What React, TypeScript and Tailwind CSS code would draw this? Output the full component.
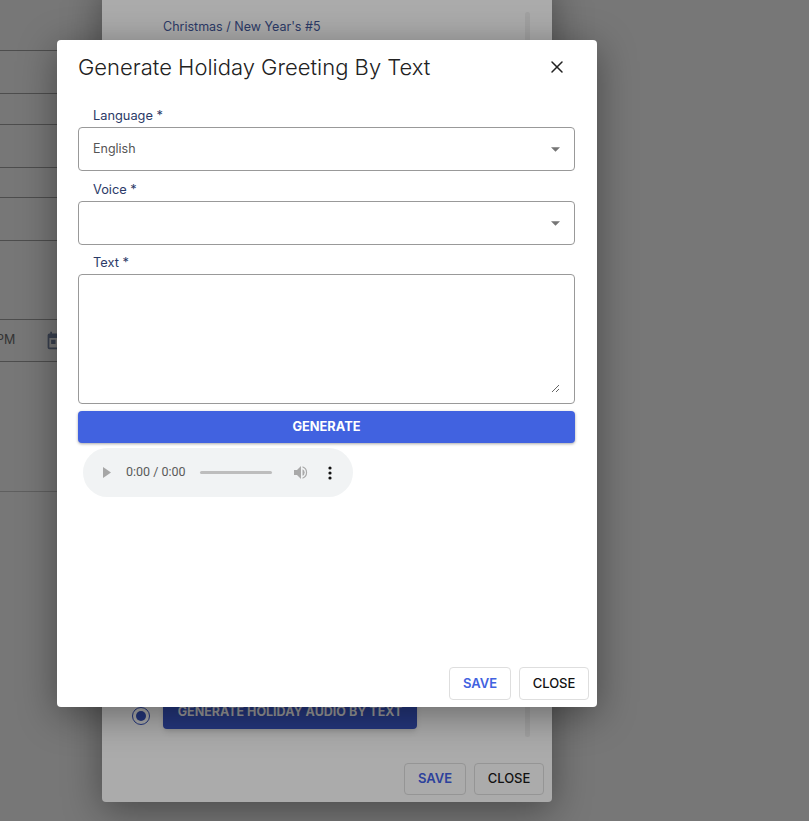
import React from 'react';
import { X } from 'lucide-react';

const labelClass = 'block pl-[15px] pt-[1px] text-[12.8px] leading-[16px] text-[#2b3a67]';

const SelectField = ({ label, value }: { label: string; value?: string }) => (
  <div>
    <label className={labelClass}>{label} *</label>
    <div className="mt-[3px] flex h-[44px] items-center justify-between rounded border border-[#999999] bg-white pl-[14px] pr-[14px]">
      <span className="text-[12.5px] text-[#555555]">{value}</span>
      <svg width="9" height="5" viewBox="0 0 10 5" className="fill-[#757575]">
        <path d="M0 0h10L5 5z" />
      </svg>
    </div>
  </div>
);

const BackgroundForm = () => (
  <div className="w-[102px]">
    <div className="h-[51px] border-b border-[#4d4d4d]" />
    <div className="h-[43px] border-b border-[#4d4d4d]" />
    <div className="h-[31px] border-b border-[#4d4d4d]" />
    <div className="h-[43px] border-b border-[#4d4d4d]" />
    <div className="h-[30px] border-b border-[#4d4d4d]" />
    <div className="h-[43px] border-b border-[#4d4d4d]" />
    <div className="h-[79px] border-b border-[#4d4d4d]" />
    <div className="flex h-[42px] items-center gap-[30px] border-b border-[#4d4d4d]">
      <span className="ml-[-4px] text-[12.5px] text-[#333333]">PM</span>
      <svg width="21" height="21" viewBox="0 0 24 24" className="shrink-0 fill-[#39404f]">
        <path d="M19 4h-1V2h-2v2H8V2H6v2H5a2 2 0 0 0-2 2v14a2 2 0 0 0 2 2h14a2 2 0 0 0 2-2V6a2 2 0 0 0-2-2zm0 16H5V9h14v11zM7 11h5v5H7z" />
      </svg>
    </div>
    <div className="h-[130px] border-b border-[#5f5f5f]" />
  </div>
);

const LowerDialog = () => (
  <div className="absolute bottom-[19px] left-[102px] flex h-[821px] w-[450px] flex-col justify-end rounded bg-[#ababab] shadow-[0_8px_38px_rgba(0,0,0,0.4)]">
    <div className="absolute left-[61px] top-[37px] text-[12.5px] text-[#2b3a67]">Christmas / New Year's #5</div>
    <div className="absolute right-[22px] top-[31px] h-[725px] w-[5px] rounded-full bg-[#a1a1a1]" />
    <div className="flex items-start gap-[13px] pl-[30px]">
      <span className="mt-[12px] flex h-[18px] w-[18px] items-center justify-center rounded-full border border-[#24367d]">
        <span className="h-[10px] w-[10px] rounded-full bg-[#24367d]" />
      </span>
      <button className="h-[34px] w-[254px] rounded bg-[#24367d] text-[12.5px] font-bold text-[#9a9a9a] shadow-md">
        GENERATE HOLIDAY AUDIO BY TEXT
      </button>
    </div>
    <div className="mb-[7px] mt-[34px] flex justify-end gap-[8px] pr-[8px]">
      <button className="h-[32px] w-[62px] rounded border border-[#959595] text-[13px] font-semibold text-[#2c419c]">SAVE</button>
      <button className="h-[32px] w-[70px] rounded border border-[#959595] text-[13px] font-medium text-[#111111]">CLOSE</button>
    </div>
  </div>
);

const AudioBar = () => (
  <div className="ml-[5px] mt-[5px] flex h-[49px] w-[270px] shrink-0 items-center rounded-full bg-[#f1f3f4] pl-[20px]">
    <svg width="8" height="11" viewBox="0 0 8 11" className="shrink-0 fill-[#a6a6a6]">
      <path d="M0 0l8 5.5L0 11z" />
    </svg>
    <span className="ml-[15px] w-[60px] shrink-0 whitespace-nowrap font-['Roboto',sans-serif] text-[12.5px] text-[#5a5a5a]">0:00 / 0:00</span>
    <div className="ml-[14px] h-[3px] w-[72px] shrink-0 rounded-full bg-[#bdbdbd]" />
    <svg width="15" height="15" viewBox="0 0 15 15" className="ml-[22px] shrink-0 fill-[#a9a9a9]">
      <path d="M0 5h3l4-4v13l-4-4H0z" />
      <path d="M8.5 4.2a3.6 3.6 0 0 1 0 6.6z" />
      <path d="M8.5 1.2a6.6 6.6 0 0 1 0 12.6v-1.4a5.2 5.2 0 0 0 0-9.8z" />
    </svg>
    <svg width="4" height="14" viewBox="0 0 4 14" className="ml-[19px] shrink-0 fill-[#111111]">
      <circle cx="2" cy="2" r="1.6" />
      <circle cx="2" cy="7" r="1.6" />
      <circle cx="2" cy="12" r="1.6" />
    </svg>
  </div>
);

export default function App() {
  return (
    <div className="relative h-[821px] w-[809px] overflow-hidden bg-[#777777] font-['Inter',sans-serif]">
      <BackgroundForm />
      <LowerDialog />

      <div className="absolute left-[57px] top-[40px] flex h-[667px] w-[540px] flex-col rounded bg-white pl-[21px] pr-[22px] shadow-[0_8px_38px_rgba(0,0,0,0.4)]">
        <div className="flex h-[54px] shrink-0 items-center justify-between">
          <h2 className="text-[22px] font-light leading-none text-[#222222]">Generate Holiday Greeting By Text</h2>
          <button className="mr-[8px] text-[#222222]" aria-label="Close">
            <X size={20} strokeWidth={1.8} />
          </button>
        </div>

        <div className="mt-[13px] flex flex-col gap-[10px]">
          <SelectField label="Language" value="English" />
          <SelectField label="Voice" />
        </div>

        <div className="mt-[9px]">
          <label className={labelClass}>Text *</label>
          <div className="mt-[3px] h-[130px] rounded border border-[#999999] bg-white pb-[10px] pl-[14px] pr-[14px] pt-[10px]">
            <textarea className="block h-full w-full resize-y bg-white outline-none" />
          </div>
        </div>

        <button className="mt-[7px] h-[32px] w-full shrink-0 rounded bg-[#4162e0] text-[12.8px] font-bold text-white shadow-[0_1px_3px_rgba(0,0,0,0.35)]">
          GENERATE
        </button>

        <AudioBar />

        <div className="mb-[7px] mr-[-14px] mt-auto flex justify-end gap-[8px]">
          <button className="h-[33px] w-[62px] rounded border border-[#dedede] text-[13px] font-semibold text-[#4162e0]">SAVE</button>
          <button className="h-[33px] w-[70px] rounded border border-[#dedede] text-[13px] font-medium text-[#111111]">CLOSE</button>
        </div>
      </div>
    </div>
  );
}
